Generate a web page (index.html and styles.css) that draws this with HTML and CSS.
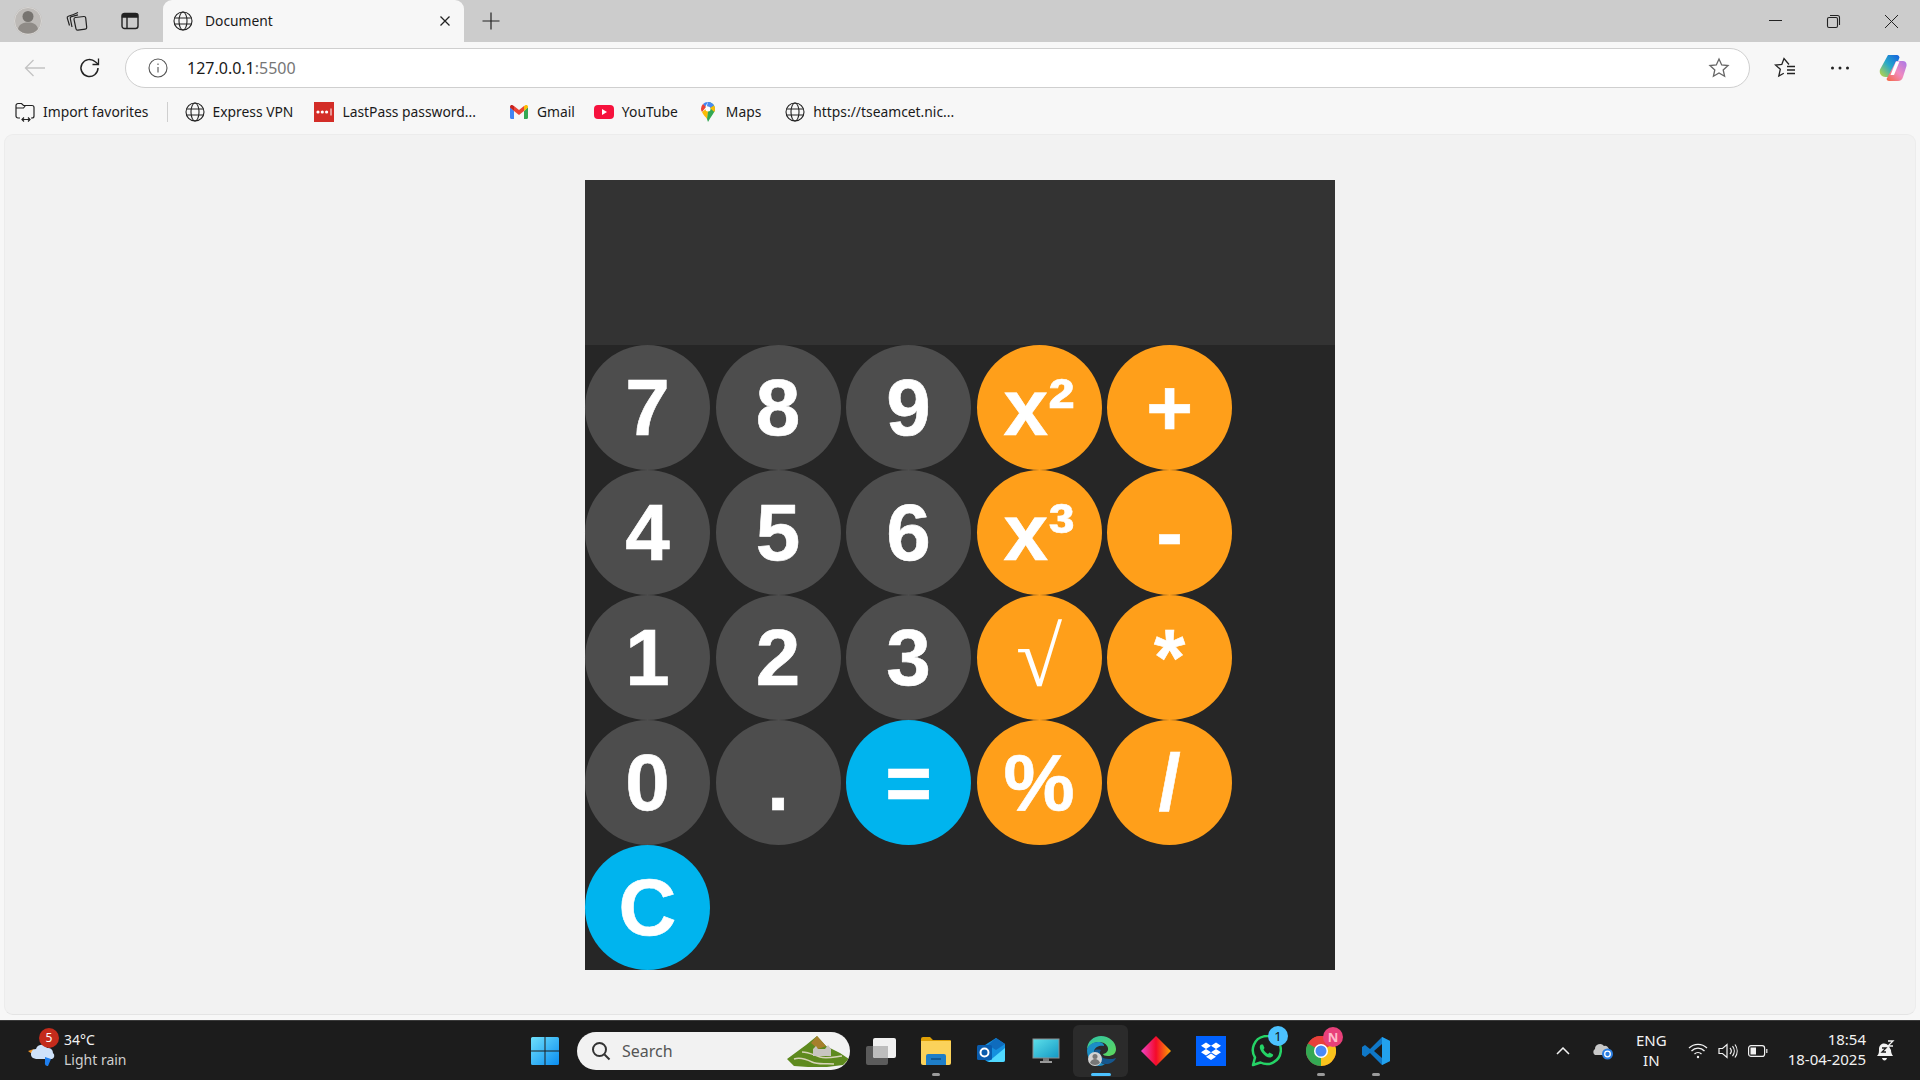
FILE: index.html
```html
<!DOCTYPE html>
<html lang="en">
<head>
<meta charset="utf-8">
<title>Document</title>
<link rel="stylesheet" href="styles.css">
</head>
<body>
<div class="tabstrip">
  <div class="strip-left">
    <span class="avatar"><svg width="38" height="38" viewBox="0 0 38 38"><circle cx="19" cy="19" r="14" fill="#bdbab7"/><circle cx="19" cy="19" r="13.5" fill="none" stroke="#d8d6d4"/><circle cx="19" cy="14.500" r="5.500" fill="#777470"/><path d="M9 27c1-5 5-6.500 10-6.500s9 1.500 10 6.500c-2.500 3-6 4.500-10 4.500S11.500 30 9 27z" fill="#8f8b87"/></svg></span>
    <span class="strip-icon"><svg width="22" height="22" viewBox="0 0 22 22" fill="none" stroke="#222" stroke-width="1.200"><path d="M3.500 15.500 1.300 8.200c-.3-1 .1-1.700 1-2L7.500 4.500 12 2.500"/><path d="M6 17 4.300 8.500c-.2-1 .2-1.700 1.100-1.900L12 4.800"/><path d="M8 9.300c-.1-1 .5-1.700 1.400-1.800l8.500-1c1-.1 1.700.5 1.800 1.400l1 9.500c.1 1-.5 1.700-1.400 1.800l-7.500 1c-1 .1-1.700-.5-1.800-1.400z"/></svg></span>
    <span class="strip-icon layout"><svg width="18" height="18" viewBox="0 0 18 18" fill="none" stroke="#222" stroke-width="1.400"><rect x="1" y="1.500" width="16" height="15" rx="2.500"/><path d="M1.500 2.500h15v2.500h-15z" fill="#222"/><path d="M6 5v11"/></svg></span>
    <div class="tab">
      <svg class="globe" width="20" height="20" viewBox="0 0 20 20" fill="none" stroke="#222" stroke-width="1.100"><circle cx="10" cy="10" r="9"/><ellipse cx="10" cy="10" rx="4" ry="9"/><path d="M1.500 7h17M1.500 13h17"/></svg>
      <span class="tab-title">Document</span>
      <svg class="tab-close" width="12" height="12" viewBox="0 0 12 12" stroke="#222" stroke-width="1.300"><path d="M1.500 1.500l9 9M10.500 1.500l-9 9"/></svg>
    </div>
    <svg class="new-tab" width="18" height="18" viewBox="0 0 18 18" stroke="#222" stroke-width="1.200"><path d="M9 .5v17M.5 9h17"/></svg>
  </div>
  <div class="win-controls">
    <svg width="58" height="42" viewBox="0 0 58 42" stroke="#222" stroke-width="1"><path d="M23 20.500h13"/></svg>
    <svg width="58" height="42" viewBox="0 0 58 42" fill="none" stroke="#222" stroke-width="1.100"><rect x="23.500" y="17.500" width="10" height="10" rx="1.500"/><path d="M26 15.500h7.500a2 2 0 0 1 2 2v7.500"/></svg>
    <svg width="58" height="42" viewBox="0 0 58 42" stroke="#222" stroke-width="1"><path d="M23 15l13 13M36 15L23 28"/></svg>
  </div>
</div>

<div class="toolbar">
  <svg class="nav-back" width="22" height="18" viewBox="0 0 22 18" fill="none" stroke="#c3c3c3" stroke-width="1.300"><path d="M21 9H1.500M9.500 1 1.500 9l8 8"/></svg>
  <svg class="nav-reload" width="22" height="22" viewBox="0 0 22 22" fill="none" stroke="#222" stroke-width="1.500"><path d="M19 11a8.500 8.500 0 1 1-2.700-6.200L19 7"/><path d="M19.500 1.500V7.500H13.500" stroke-width="1.300"/></svg>
  <div class="address">
    <svg width="20" height="20" viewBox="0 0 20 20" fill="none" stroke="#555" stroke-width="1.100"><circle cx="10" cy="10" r="9"/><path d="M10 9v5.500M10 5.500v1.500"/></svg>
    <span class="url">127.0.0.1<span class="url-port">:5500</span></span>
    <svg class="addr-star" width="22" height="22" viewBox="0 0 22 22" fill="none" stroke="#666" stroke-width="1.300"><path d="M11 2l2.700 6 6.300.6-4.800 4.300 1.400 6.400L11 16l-5.600 3.300 1.400-6.400L2 8.600 8.300 8z"/></svg>
  </div>
  <div class="tool-right">
    <svg width="22" height="22" viewBox="0 0 22 22" fill="none" stroke="#222" stroke-width="1.300"><path d="M15 7.500 10 1.500 7.800 7.500 1.500 8l4.800 4.300L4.800 19l5-2.800"/><path d="M13 9.500h8M13 13h8M13 16.500h8"/></svg>
    <svg class="dots" width="22" height="6" viewBox="0 0 22 6" fill="#222"><circle cx="3.500" cy="3" r="1.500"/><circle cx="11" cy="3" r="1.500"/><circle cx="18.500" cy="3" r="1.500"/></svg>
    <svg width="28" height="27" viewBox="0 0 28 27"><defs><linearGradient id="cpA" x1="0" y1="1" x2="1" y2="0"><stop offset="0" stop-color="#c7d93a"/><stop offset=".5" stop-color="#27a8c9"/><stop offset="1" stop-color="#1560e0"/></linearGradient><linearGradient id="cpB" x1="0" y1="1" x2="1" y2="0"><stop offset="0" stop-color="#f6653c"/><stop offset=".5" stop-color="#f08ac0"/><stop offset="1" stop-color="#a878e8"/></linearGradient></defs><path d="M9 1h9c1.500 0 2 1 2.500 2.500L14 20c-.7 2-2 3-4 3H6.500C2 23 0 19 1 15.500z" fill="url(#cpA)"/><path d="M14 13l3-6h7c3 0 4 3 3.500 5L24 23c-.7 2.500-2.500 4-5 4h-9c-1.500 0-2-1-2.500-2z" fill="url(#cpB)"/><path d="M17 7.500h3.500L15 21h-3.500z" fill="#fff"/></svg>
  </div>
</div>

<div class="bookmarks">
  <div class="bm bm-import">
    <svg width="20" height="20" viewBox="0 0 20 20" fill="none" stroke="#222" stroke-width="1.200"><path d="M5 16H3a2 2 0 0 1-2-2V3.500a2 2 0 0 1 2-2h3.500l2 2H17a2 2 0 0 1 2 2V14a2 2 0 0 1-2 2h-1"/><path d="M1 6h7.500l2-2.500"/><path d="M7 17.500h8M9 15.500l-2 2 2 2M13 15.500l2 2-2 2"/></svg>
    <span>Import favorites</span>
  </div>
  <div class="bm-divider"></div>
  <div class="bm bm-express">
    <svg width="20" height="20" viewBox="0 0 20 20" fill="none" stroke="#222" stroke-width="1.100"><circle cx="10" cy="10" r="9"/><ellipse cx="10" cy="10" rx="4" ry="9"/><path d="M1.500 7h17M1.500 13h17"/></svg>
    <span>Express VPN</span>
  </div>
  <div class="bm bm-lastpass">
    <svg width="20" height="20" viewBox="0 0 20 20"><rect width="20" height="20" fill="#d32d27"/><circle cx="4" cy="10" r="1.600" fill="#fff"/><circle cx="8.300" cy="10" r="1.600" fill="#fff"/><circle cx="12.600" cy="10" r="1.600" fill="#fff"/><rect x="16.500" y="6.500" width="1" height="7" fill="#fff"/></svg>
    <span>LastPass password...</span>
  </div>
  <div class="bm bm-gmail">
    <svg width="18" height="14" viewBox="0 0 18 14"><path d="M0 2v10.500c0 .8.500 1.500 1.500 1.500H4V6z" fill="#4285f4"/><path d="M14 14h2.500c1 0 1.500-.7 1.500-1.500V2l-4 4z" fill="#34a853"/><path d="M14 1v5l4-3.500V2c0-2-2-2.500-3-1.500z" fill="#fbbc04"/><path d="M4 6V1l5 4 5-4v5l-5 4z" fill="#ea4335"/><path d="M0 2c0-2 2-2.500 3-1.500L4 1v5L0 2.500z" fill="#c5221f"/></svg>
    <span>Gmail</span>
  </div>
  <div class="bm bm-youtube">
    <svg width="20" height="14" viewBox="0 0 20 14"><rect width="20" height="14" rx="4" fill="#f6123d"/><path d="M8 4l5 3-5 3z" fill="#fff"/></svg>
    <span>YouTube</span>
  </div>
  <div class="bm bm-maps">
    <svg width="14" height="20" viewBox="0 0 14 20"><path d="M7 0a7 7 0 0 1 7 7c0 2-1 3.500-2 5l-3 4.500L7 20l-1-3z" fill="#34a853"/><path d="M2 2a7 7 0 0 1 5-2l-3 5z" fill="#4285f4"/><path d="M7 0a7 7 0 0 1 6 3.500L9.500 6 6 4z" fill="#4a8af4"/><path d="M13 3.500A7 7 0 0 1 14 7c0 1-.2 2-.7 3L9 6z" fill="#fbbc04"/><path d="M2 2 5 5 1 10C.3 9 0 8 0 7a7 7 0 0 1 2-5z" fill="#ea4335"/><path d="M1 10l4-3 2 2-1 8c-1-2-4-4-5-7z" fill="#fbbc04"/><circle cx="7" cy="7" r="2.500" fill="#fff"/></svg>
    <span>Maps</span>
  </div>
  <div class="bm bm-tseam">
    <svg width="20" height="20" viewBox="0 0 20 20" fill="none" stroke="#222" stroke-width="1.100"><circle cx="10" cy="10" r="9"/><ellipse cx="10" cy="10" rx="4" ry="9"/><path d="M1.500 7h17M1.500 13h17"/></svg>
    <span>https://tseamcet.nic...</span>
  </div>
</div>

<main class="page">
  <div class="calculator">
    <div class="display"></div>
    <div class="keys">
      <button class="key num">7</button><button class="key num">8</button><button class="key num">9</button><button class="key op">x²</button><button class="key op">+</button>
      <button class="key num">4</button><button class="key num">5</button><button class="key num">6</button><button class="key op">x³</button><button class="key op">-</button>
      <button class="key num">1</button><button class="key num">2</button><button class="key num">3</button><button class="key op root">√</button><button class="key op">*</button>
      <button class="key num">0</button><button class="key num">.</button><button class="key act">=</button><button class="key op">%</button><button class="key op">/</button>
      <button class="key act">C</button>
    </div>
  </div>
</main>

<footer class="taskbar">
  <div class="weather">
    <span class="weather-badge">5</span>
    <svg class="weather-icon" width="30" height="24" viewBox="0 0 30 24"><path d="M1 8l6-2-2 5z" fill="#f0972a"/><path d="M6 15a5 5 0 0 1 3-9 6 6 0 0 1 11-1 5 5 0 0 1 6 5 3.500 3.500 0 0 1-1 6H9z" fill="#cfe2fa"/><path d="M18 14l6 2-3 7c-2 0-3.500-1-3-4z" fill="#1f7fef"/></svg>
    <div class="weather-text"><span class="temp">34°C</span><span class="cond">Light rain</span></div>
  </div>

  <div class="task-center">
    <span class="task-item"><svg width="30" height="30" viewBox="0 0 30 30"><defs><linearGradient id="wn" x1="0" y1="0" x2="1" y2="1"><stop offset="0" stop-color="#6fe0fb"/><stop offset="1" stop-color="#0a8df0"/></linearGradient></defs><path d="M1 2.500A1.500 1.500 0 0 1 2.500 1H14.500V14.500H1zM15.500 1H27.500A1.500 1.500 0 0 1 29 2.500V14.500H15.500zM1 15.500H14.500V29H2.500A1.500 1.500 0 0 1 1 27.500zM15.500 15.500H29V27.500A1.500 1.500 0 0 1 27.500 29H15.500z" fill="url(#wn)"/></svg></span>
    <div class="search">
      <svg width="20" height="20" viewBox="0 0 20 20" fill="none" stroke="#333" stroke-width="2"><circle cx="8.500" cy="8.500" r="6.500"/><path d="M13.500 13.500l5 5"/></svg>
      <span class="search-text">Search</span>
      <svg class="search-art" width="64" height="32" viewBox="0 0 64 32"><path d="M1 24 20 10 31 1l9 10 14 7 9 6-6 6-16 2H22l-14-1z" fill="#5e8a1e"/><path d="M31 1l9 10-8 3-7-6z" fill="#a67f2c"/><path d="M8 24c6-2 12 0 18 3s14 1 22 2M16 17c6 0 12 3 18 5s14 0 22-1" fill="none" stroke="#d7d4b8" stroke-width="1.500"/><path d="M27 21v-7l3-3 2 3h7l3-4 3 4v7z" fill="#c8c5c0"/></svg>
    </div>
    <span class="task-item"><svg width="32" height="28" viewBox="0 0 32 28"><rect x="1" y="9" width="22" height="19" rx="2" fill="#5b5b5b"/><rect x="8" y="1" width="23" height="20" rx="2" fill="#f1f1f1"/><path d="M8 9h15v12H10a2 2 0 0 1-2-2z" fill="#bdbdbd"/></svg></span>
    <span class="task-item running"><svg width="32" height="28" viewBox="0 0 32 28"><path d="M1 2a2 2 0 0 1 2-2h7l3 3h17a1 1 0 0 1 1 1v3H1z" fill="#e0a106"/><path d="M1 4h30v22a2 2 0 0 1-2 2H3a2 2 0 0 1-2-2z" fill="#fbd25a"/><path d="M6 19a2 2 0 0 1 2-2h16a2 2 0 0 1 2 2v9H6z" fill="#1e7ec8"/><path d="M11 22h10" stroke="#0c4f88" stroke-width="1.500"/></svg></span>
    <span class="task-item"><svg width="30" height="28" viewBox="0 0 30 28"><path d="M9 8 20 1l9 6v16a2 2 0 0 1-2 2H12L9 23z" fill="#1490df"/><path d="M20 1l9 6-9 6-8-5z" fill="#0f6cbd"/><path d="M12 25 29 11v12a2 2 0 0 1-2 2z" fill="#50d9ff"/><rect x="1" y="8" width="15" height="15" rx="1.500" fill="#0a5cad"/><circle cx="8.500" cy="15.500" r="4" fill="none" stroke="#fff" stroke-width="2"/></svg></span>
    <span class="task-item"><svg width="28" height="26" viewBox="0 0 28 26"><defs><linearGradient id="mon" x1="0" y1="0" x2="1" y2="1"><stop offset="0" stop-color="#5de0ea"/><stop offset="1" stop-color="#1398c4"/></linearGradient></defs><rect x="1" y="1" width="26" height="19" fill="url(#mon)" stroke="#8b8f92"/><rect x="11" y="20" width="6" height="3" fill="#777"/><rect x="8" y="23" width="12" height="2" fill="#999"/></svg></span>
    <span class="task-item current"><svg width="32" height="32" viewBox="0 0 32 32"><defs><linearGradient id="edA" x1="0" y1="0" x2="1" y2="1"><stop offset="0" stop-color="#2ec4a8"/><stop offset="1" stop-color="#5fd85a"/></linearGradient></defs><path d="M2 15C2 6 9 1 16 1c8 0 15 6 15 13 0 5-4 7-8 7-3 0-5-1-5-2 0 0 6-1 5-6-1-4-5-6-9-6C8 7 3 11 2 15z" fill="url(#edA)"/><path d="M2 15C3 10 8 7 13 7c4 0 6 2 6 4-3-1-9 0-10 5-1 6 4 12 11 13-2 1-3 2-5 2C7 31 2 23 2 15z" fill="#1b8ec6"/><path d="M9 16c0 6 6 13 12 13 4 0 8-2 10-6-2 1-5 1-7 1-6 0-9-3-9-6 0-1 0-2 1-3-4-1-7 0-7 1z" fill="#15578e"/><circle cx="10" cy="24" r="7" fill="#d3d3d3"/><circle cx="10" cy="21.500" r="2.500" fill="#777"/><path d="M5 28c1-3 3-4 5-4s4 1 5 4a7 7 0 0 1-10 0z" fill="#777"/></svg></span>
    <span class="task-item"><svg width="30" height="30" viewBox="0 0 30 30"><defs><linearGradient id="dia" x1="0" y1="0" x2="1" y2="0"><stop offset="0" stop-color="#ee44c8"/><stop offset=".5" stop-color="#f40a2a"/><stop offset="1" stop-color="#fca500"/></linearGradient></defs><path d="M15 0l15 15-15 15L0 15z" fill="url(#dia)"/></svg></span>
    <span class="task-item"><svg width="30" height="30" viewBox="0 0 30 30"><rect width="30" height="30" fill="#0061fe"/><path d="M10 6.500l5 3.300-5 3.200-5-3.200zM20 6.500l5 3.300-5 3.200-5-3.200zM10 13l5 3.300-5 3.200-5-3.200zM20 13l5 3.300-5 3.200-5-3.200zM15 17.500l5 3.200-5 3.300-5-3.300z" fill="#fff"/></svg></span>
    <span class="task-item"><svg width="32" height="32" viewBox="0 0 32 32" fill="none"><path d="M3 30l2-7.500A14 14 0 1 1 10.500 27.500z" stroke="#25d366" stroke-width="2.500" stroke-linejoin="round"/><path d="M11 9.500c-2 1.500-1.500 4.500 1 8s6 5.500 8.500 5c2-.5 3-2 2.500-3l-3.500-2-1.500 1.500c-1.500-.5-3.500-2.500-4.500-4.500l1-1.500-1.500-3.500z" fill="#25d366"/></svg><span class="task-badge wa">1</span></span>
    <span class="task-item running"><svg width="30" height="30" viewBox="0 0 30 30"><circle cx="15" cy="15" r="15" fill="#e8403a"/><path d="M15 15 28 7.500A15 15 0 0 1 15 30z" fill="#f9c31c"/><path d="M15 15 15 30A15 15 0 0 1 2 7.500z" fill="#34a853"/><path d="M2 7.500A15 15 0 0 1 28 7.500H15z" fill="#e8403a"/><circle cx="15" cy="15" r="7" fill="#fff"/><circle cx="15" cy="15" r="5.500" fill="#4a8af4"/></svg><span class="task-badge ch">N</span></span>
    <span class="task-item running"><svg width="30" height="30" viewBox="0 0 30 30"><path d="M21 1l8 4v20l-8 4L9 17l-5 4-3-2v-8l3-2 5 4z" fill="#0f78c8"/><path d="M21 1l8 4v20l-8 4z" fill="#22a2ee"/><path d="M21 8v14l-8-7z" fill="#1c1c1c"/></svg></span>
  </div>

  <div class="tray">
    <svg class="tray-chev" width="14" height="8" viewBox="0 0 14 8" fill="none" stroke="#f2f2f2" stroke-width="1.500"><path d="M1 7l6-6 6 6"/></svg>
    <svg class="tray-cloud" width="22" height="18" viewBox="0 0 22 18"><path d="M3 13a3.500 3.500 0 0 1 0-6 5 5 0 0 1 9-3 4 4 0 0 1 5 4v5z" fill="#c8c8c8"/><circle cx="15.500" cy="12" r="5.500" fill="#2a7de1"/><circle cx="15.500" cy="12" r="2.800" fill="none" stroke="#fff" stroke-width="1.300"/></svg>
    <div class="lang"><span>ENG</span><span>IN</span></div>
    <svg class="tray-wifi" width="20" height="16" viewBox="0 0 20 16" fill="none" stroke="#f2f2f2" stroke-width="1.300"><path d="M1 5a13 13 0 0 1 18 0M3.500 8a9 9 0 0 1 13 0M6.500 11a5 5 0 0 1 7 0"/><circle cx="10" cy="14" r="1.200" fill="#f2f2f2" stroke="none"/></svg>
    <svg class="tray-vol" width="20" height="16" viewBox="0 0 20 16" fill="none" stroke="#f2f2f2" stroke-width="1.200"><path d="M1 5.500h3.500L9 1.500v13l-4.500-4H1z"/><path d="M12 5a4.500 4.500 0 0 1 0 6M14.500 3a8 8 0 0 1 0 10M17 1.500a11 11 0 0 1 0 13"/></svg>
    <svg class="tray-batt" width="20" height="12" viewBox="0 0 20 12" fill="none" stroke="#f2f2f2" stroke-width="1.200"><rect x=".6" y=".6" width="16" height="10.800" rx="2.500"/><rect x="2.500" y="2.500" width="5.500" height="7" fill="#f2f2f2" stroke="none"/><path d="M18.800 4v4"/></svg>
    <div class="clock"><span>18:54</span><span>18-04-2025</span></div>
    <span class="tray-bell"><svg width="20" height="22" viewBox="0 0 20 22"><path d="M1 16c2-2 2-4 2-7 0-3 2-5.500 5-5.500 2 0 4 1 5 3l2 3.500c0 2 .5 4 2 6z" fill="#f2f2f2"/><path d="M6 18h5c-.3 1.500-1.300 2.500-2.500 2.500S6.300 19.500 6 18z" fill="#f2f2f2"/><path d="M6 8h4l-4 4h4" fill="none" stroke="#1c1c1c" stroke-width="1.300"/><path d="M12 1h5l-5 5h5" fill="none" stroke="#f2f2f2" stroke-width="1.300"/></svg></span>
  </div>
</footer>
</body>
</html>
```

FILE: styles.css
```css
* { box-sizing: border-box; }

html, body { height: 100%; }

body {
  margin: 0;
  height: 1080px;
  overflow: hidden;
  display: flex;
  flex-direction: column;
  background: #f7f7f7;
  font-family: "Noto Sans", "Liberation Sans", sans-serif;
  color: #1a1a1a;
}

svg { display: block; flex: none; }

/* tab strip */
.tabstrip {
  height: 42px;
  flex: none;
  background: #cccccc;
  display: flex;
  justify-content: space-between;
}

.strip-left { display: flex; align-items: center; padding-left: 9px; }
.avatar { width: 38px; display: flex; justify-content: center; }
.strip-icon { width: 60px; display: flex; justify-content: center; }
.strip-icon.layout { width: 46px; margin-right: 10px; }

.tab {
  width: 301px;
  height: 42px;
  align-self: flex-end;
  background: #f7f7f7;
  border-radius: 9px 9px 0 0;
  display: flex;
  align-items: center;
  padding-left: 10px;
}

.tab-title { font-size: 13.8px; margin: 0 0 2px 12px; flex: 1; }
.tab-close { margin-right: 13px; }
.new-tab { margin-left: 18px; }

.win-controls { display: flex; }

/* toolbar */
.toolbar {
  height: 51px;
  flex: none;
  display: flex;
  align-items: center;
  padding-left: 24px;
}

.nav-back { margin-right: 33px; }
.nav-reload { margin-right: 24px; }

.address {
  width: 1625px;
  height: 40px;
  background: #fff;
  border: 1px solid #cfcfcf;
  border-radius: 20px;
  display: flex;
  align-items: center;
  padding: 0 19px 0 22px;
}

.url { font-size: 16px; margin-left: 19px; flex: 1; }
.url-port { color: #767676; }

.tool-right { display: flex; align-items: center; margin-left: 24px; }
.dots { margin: 0 28px 0 33px; }

/* bookmarks */
.bookmarks {
  height: 41px;
  flex: none;
  display: flex;
  align-items: center;
  padding: 0 0 4px 15px;
  font-size: 13.85px;
}

.bm { display: flex; align-items: center; gap: 8px; }
.bm-divider { width: 1px; height: 20px; background: #cfcfcf; margin: 0 17px 0 18px; }
.bm-express { margin-right: 21px; }
.bm-lastpass { margin-right: 34px; }
.bm-gmail { margin-right: 19px; gap: 9px; }
.bm-youtube { margin-right: 23px; }
.bm-maps { margin-right: 24px; gap: 11px; }

/* page */
.page {
  height: 881px;
  flex: none;
  margin: 0 4px;
  background: #f2f2f2;
  border: 1px solid #ececec;
  border-bottom-color: #e4e4e4;
  border-radius: 9px;
  display: flex;
  justify-content: center;
  padding-top: 45px;
}

.calculator {
  width: 750px;
  height: 790px;
  background: #262626;
}

.display { height: 165px; background: #333333; }

.keys {
  display: grid;
  grid-template-columns: repeat(5, 125px);
  grid-auto-rows: 125px;
  column-gap: 5.5px;
}

.key {
  border: 0;
  padding: 0;
  border-radius: 50%;
  font-family: "Liberation Sans", Arial, sans-serif;
  font-size: 80px;
  font-weight: 700;
  color: #fff;
  line-height: 1;
  -webkit-text-stroke: 0.6px #fff;
}

.key.root {
  font-family: "Liberation Serif", "Times New Roman", serif;
  font-size: 84px;
  font-weight: 400;
  -webkit-text-stroke: 0;
}

.num { background: #4d4d4d; }
.op { background: #ff9f1a; }
.act { background: #00b4ee; }

/* taskbar */
.taskbar {
  height: 60px;
  flex: none;
  margin-top: 5px;
  background: #1c1c1c;
  border-top: 1px solid #3a3a3a;
  display: flex;
  align-items: center;
  color: #f2f2f2;
}

.weather { display: flex; align-items: center; width: 500px; padding-left: 27px; position: relative; }
.weather-badge {
  position: absolute;
  left: 39px;
  top: -2px;
  width: 20px;
  height: 20px;
  border-radius: 50%;
  background: #c42b1c;
  color: #fff;
  font-size: 12px;
  text-align: center;
  line-height: 20px;
}
.weather-icon { margin-top: 8px; }
.weather-text { display: flex; flex-direction: column; margin: 0 0 2px 7px; font-size: 14px; line-height: 20px; }
.cond { color: #cfcfcf; }

.task-center { display: flex; align-items: center; margin-left: 17px; }
.task-item {
  width: 55px;
  height: 52px;
  display: flex;
  align-items: center;
  justify-content: center;
  position: relative;
  border-radius: 6px;
}
.task-item.current { background: #2b2b2b; }
.task-item.current::after,
.task-item.running::after {
  content: "";
  position: absolute;
  bottom: 1px;
  left: 50%;
  width: 8px;
  height: 3px;
  margin-left: -4px;
  border-radius: 2px;
  background: #9a9a9a;
}
.task-item.current::after { width: 20px; margin-left: -10px; background: #4cc2ff; }

.task-badge {
  position: absolute;
  width: 20px;
  height: 20px;
  border-radius: 50%;
  font-size: 13px;
  line-height: 20px;
  text-align: center;
}
.task-badge.wa { top: 1px; right: 5px; background: #4cc2ff; color: #111; }
.task-badge.ch { top: 2px; right: 5px; background: #e8407a; color: #fbc; font-weight: 700; }

.search {
  width: 273px;
  height: 38px;
  margin: 0 3px 0 5px;
  background: #f2f2f2;
  border-radius: 19px;
  display: flex;
  align-items: center;
  padding-left: 14px;
  color: #555;
  overflow: hidden;
}
.search-text { font-size: 16px; margin-left: 11px; flex: 1; }

.tray { display: flex; align-items: center; margin-left: auto; }
.tray-chev { margin-right: 22px; }
.tray-cloud { margin-right: 22px; }
.lang { display: flex; flex-direction: column; align-items: center; font-size: 15px; line-height: 20px; margin: 0 21px 2px 0; }
.tray-wifi { margin-right: 10px; }
.tray-vol { margin-right: 10px; }
.tray-batt { margin-right: 20px; }
.clock { display: flex; flex-direction: column; align-items: flex-end; font-size: 15px; line-height: 20px; margin: 0 10px 3px 0; }
.tray-bell { margin-right: 24px; }
```
